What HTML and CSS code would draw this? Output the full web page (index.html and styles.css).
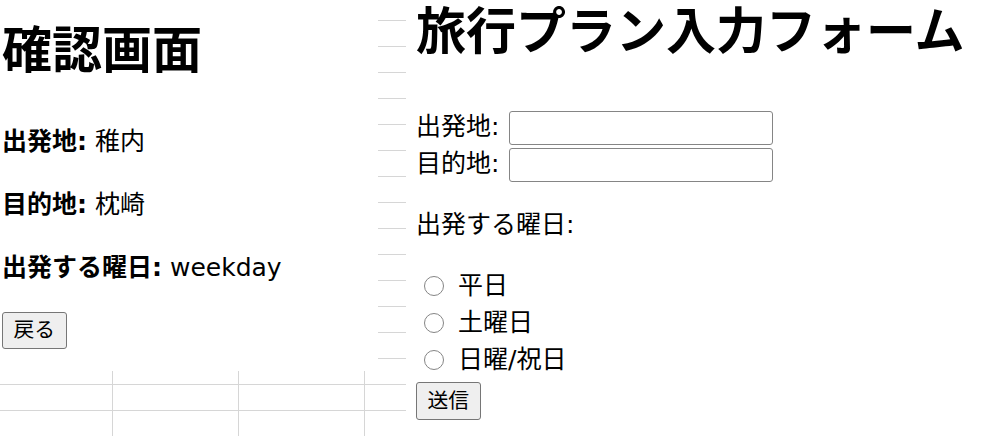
FILE: index.html
```html
<!DOCTYPE html>
<html lang="ja">
<head>
<meta charset="utf-8">
<title>旅行プラン</title>
<link rel="stylesheet" href="styles.css">
</head>
<body>
<div class="page">
  <section class="confirm">
    <h1 class="title">確認画面</h1>
    <p class="item first"><strong>出発地:</strong> 稚内</p>
    <p class="item"><strong>目的地:</strong> 枕崎</p>
    <p class="item"><strong>出発する曜日:</strong> weekday</p>
    <button class="btn" type="button">戻る</button>
  </section>
  <section class="plan">
    <h1 class="title plan-title">旅行プラン入力フォーム</h1>
    <form class="form">
      <div class="field first-field"><label>出発地: <input class="text" type="text"></label></div>
      <div class="field"><label>目的地: <input class="text" type="text"></label></div>
      <p class="group-label">出発する曜日:</p>
      <div class="options">
        <label class="option"><input class="radio" type="radio" name="day" value="weekday">平日</label>
        <label class="option"><input class="radio" type="radio" name="day" value="saturday">土曜日</label>
        <label class="option"><input class="radio" type="radio" name="day" value="holiday">日曜/祝日</label>
      </div>
      <button class="btn submit" type="submit">送信</button>
    </form>
  </section>
</div>
</body>
</html>
```
FILE: styles.css
```css
html, body {
  margin: 0;
  padding: 0;
}
body {
  width: 990px;
  height: 436px;
  overflow: hidden;
  color: #000;
  font-family: "DejaVu Sans", "Noto Sans CJK JP", sans-serif;
  font-size: 25px;
  background-color: #fff;
  background-image:
    linear-gradient(to right, #d6d6d6 1px, transparent 1px),
    linear-gradient(to bottom, #d6d6d6 1px, transparent 1px);
  background-size: 126px 26px, 126px 26px;
  background-position: 112px 20px, 112px 20px;
}
.page {
  display: flex;
  align-items: flex-start;
  height: 436px;
}
.confirm {
  width: 376px;
  height: 371px;
  padding-left: 2px;
  background: #fff;
}
.plan {
  flex: 1;
  height: 436px;
  margin-left: 28px;
  padding-left: 10px;
  background: #fff;
}
.title {
  margin: 21px 0 0;
  font-size: 50px;
  line-height: 60px;
  font-weight: 700;
  white-space: nowrap;
}
.plan-title {
  margin-top: 2px;
}
.item {
  margin: 25px 0 0;
  line-height: 38px;
  height: 38px;
}
.item.first {
  margin-top: 42px;
}
.item strong {
  font-weight: 700;
}
.btn {
  display: block;
  margin: 25px 0 0;
  padding: 2px 10.5px;
  font-family: inherit;
  font-size: 20.8px;
  line-height: 31px;
  color: #000;
  background: #efefef;
  border: 1px solid #767676;
  border-radius: 3px;
}
.form {
  margin: 0;
}
.field {
  height: 37px;
  display: flex;
  align-items: center;
  line-height: 37px;
}
.first-field {
  margin-top: 46px;
}
.text {
  box-sizing: border-box;
  width: 264px;
  height: 34px;
  margin: 0 0 0 2px;
  vertical-align: middle;
  border: 1px solid #858585;
  border-radius: 3px;
  background: #fff;
  font-size: 20px;
}
.group-label {
  margin: 24px 0 0;
  line-height: 38px;
  height: 38px;
}
.options {
  margin-top: 23px;
}
.option {
  display: flex;
  align-items: center;
  height: 37px;
  line-height: 37px;
}
.radio {
  appearance: none;
  -webkit-appearance: none;
  box-sizing: border-box;
  width: 20px;
  height: 20px;
  margin: 0 14px 0 8px;
  border: 1.5px solid #858585;
  border-radius: 50%;
  background: #fff;
}
.submit {
  margin-top: 4px;
  line-height: 32px;
}
```
